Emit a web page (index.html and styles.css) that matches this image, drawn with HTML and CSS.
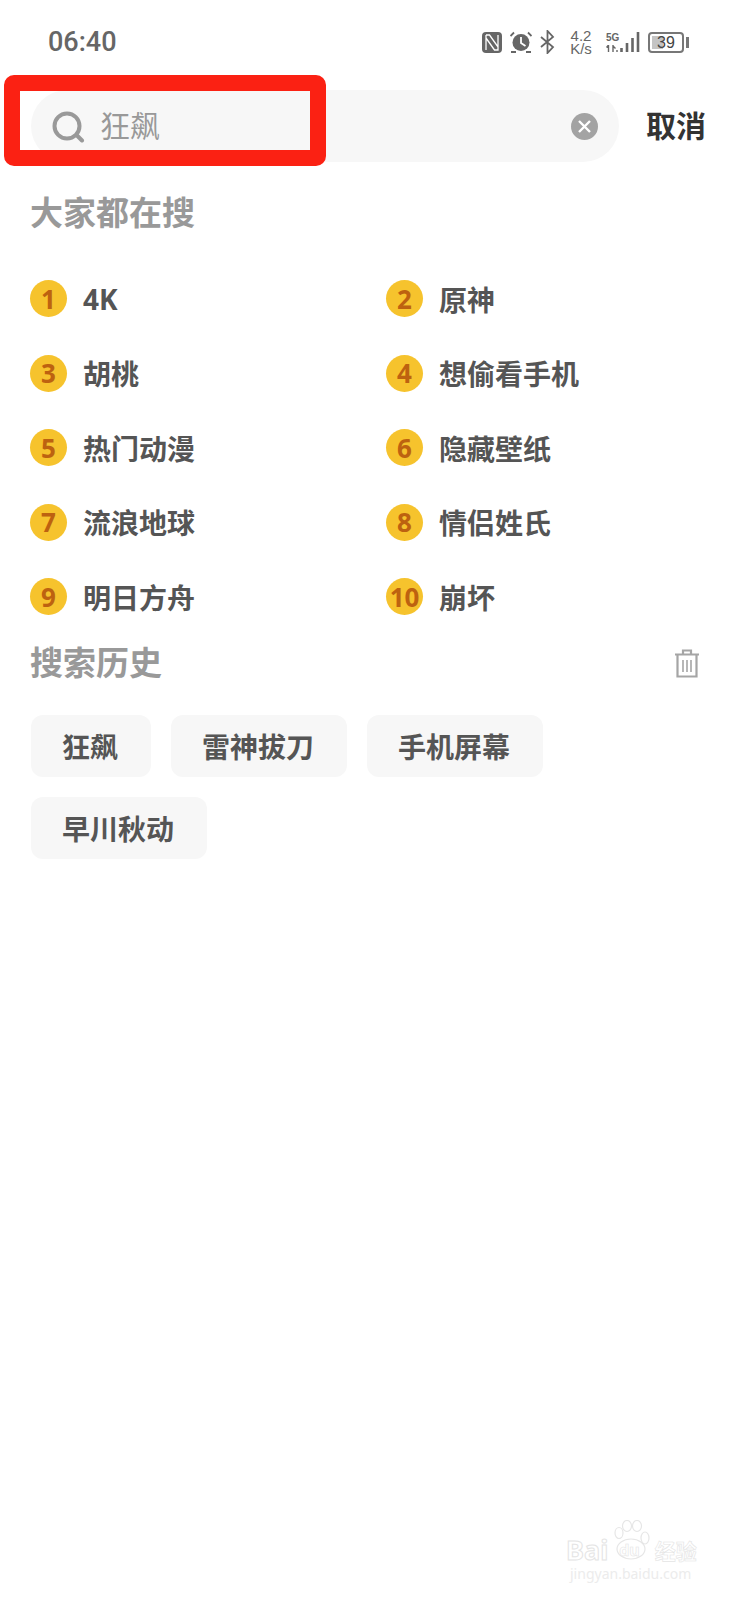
FILE: index.html
```html
<!DOCTYPE html>
<html lang="zh-CN">
<head>
    <meta charset="UTF-8">
    <meta name="viewport" content="width=device-width, initial-scale=1.0">
    <title>搜索</title>
    <link rel="stylesheet" href="styles.css">
</head>
<body>
    <div class="page">
        <!-- 状态栏 -->
        <div class="status-bar">
            <div class="time">06:40</div>
            <div class="status-icons">
                <svg class="icon-nfc" width="20" height="21" viewBox="0 0 20 21">
                    <rect width="20" height="21" rx="4" fill="#666"/>
                    <path d="M4 3h3.500l8.500 12V3M4 3v15M16 15v3h-3.500L4 6" fill="none" stroke="#fff" stroke-width="1.300"/>
                </svg>
                <svg class="icon-alarm" width="22" height="22" viewBox="0 0 22 22">
                    <circle cx="11" cy="11.500" r="8.500" fill="#666"/>
                    <path d="M11 6v6l4.500 3" fill="none" stroke="#fff" stroke-width="1.800"/>
                    <path d="M0.500 5L4 1.500M21.500 5L18 1.500M1 21h5M16 21h5" fill="none" stroke="#666" stroke-width="1.800"/>
                </svg>
                <svg class="icon-bt" width="15" height="24" viewBox="0 0 15 24">
                    <path d="M1 7l12 10-5.500 6V1L13 7 1 17" fill="none" stroke="#666" stroke-width="1.800"/>
                </svg>
                <div class="speed">4.2 K/s</div>
                <div class="signal">
                    <div class="net-label">
                        <span class="net-5g">5G</span>
                        <svg width="12" height="7" viewBox="0 0 12 7">
                            <path d="M2.500 0v7M0.500 2.500L2.500 0M7 0v7M7 1l2.500 2.500M11 5v2" fill="none" stroke="#666" stroke-width="1.400"/>
                        </svg>
                    </div>
                    <svg width="20" height="20" viewBox="0 0 20 20">
                        <path d="M1.500 16v4M7 11v9M12.500 6v14M18 0v20" fill="none" stroke="#666" stroke-width="2.600"/>
                    </svg>
                </div>
                <div class="battery">
                    <div class="battery-body">
                        <div class="battery-level"></div>
                        <span class="battery-text">39</span>
                    </div>
                    <div class="battery-tip"></div>
                </div>
            </div>
        </div>

        <!-- 搜索框 -->
        <div class="search-row">
            <div class="search-box">
                <svg class="search-icon" width="34" height="32" viewBox="0 0 34 32">
                    <circle cx="15" cy="15" r="12.500" fill="none" stroke="#999" stroke-width="4"/>
                    <path d="M24.500 24l5.500 5.500" fill="none" stroke="#999" stroke-width="4" stroke-linecap="round"/>
                </svg>
                <span class="search-text">狂飙</span>
                <svg class="clear-icon" width="27" height="27" viewBox="0 0 27 27">
                    <circle cx="13.500" cy="13.500" r="13.500" fill="#a3a3a3"/>
                    <path d="M8 8l11 11M19 8L8 19" fill="none" stroke="#fff" stroke-width="2.400"/>
                </svg>
            </div>
            <div class="cancel">取消</div>
        </div>

        <div class="section-title hot-title">大家都在搜</div>

        <div class="hot-list">
            <div class="hot-item"><span class="rank">1</span><span>4K</span></div>
            <div class="hot-item"><span class="rank">2</span><span>原神</span></div>
            <div class="hot-item"><span class="rank">3</span><span>胡桃</span></div>
            <div class="hot-item"><span class="rank">4</span><span>想偷看手机</span></div>
            <div class="hot-item"><span class="rank">5</span><span>热门动漫</span></div>
            <div class="hot-item"><span class="rank">6</span><span>隐藏壁纸</span></div>
            <div class="hot-item"><span class="rank">7</span><span>流浪地球</span></div>
            <div class="hot-item"><span class="rank">8</span><span>情侣姓氏</span></div>
            <div class="hot-item"><span class="rank">9</span><span>明日方舟</span></div>
            <div class="hot-item"><span class="rank">10</span><span>崩坏</span></div>
        </div>

        <!-- 搜索历史 -->
        <div class="history-header">
            <div class="section-title">搜索历史</div>
            <svg width="26" height="30" viewBox="0 0 26 30">
                <path d="M1 6.500h24M9 6V2.500h8V6" fill="none" stroke="#a5a5a5" stroke-width="2.200"/>
                <path d="M3.500 7v21.500h19V7" fill="none" stroke="#a5a5a5" stroke-width="2.200"/>
                <path d="M9 12v12M13 12v12M17 12v12" fill="none" stroke="#a5a5a5" stroke-width="1.600"/>
            </svg>
        </div>

        <div class="chips">
            <div class="chip">狂飙</div>
            <div class="chip">雷神拔刀</div>
            <div class="chip">手机屏幕</div>
            <div class="chip">早川秋动</div>
        </div>

        <!-- 红色标注框 -->
        <div class="mark-box"></div>

        <!-- 水印 -->
        <div class="watermark">
            <svg class="paw" width="42" height="40" viewBox="0 0 42 40">
                <g fill="none" stroke="#e6e6e6" stroke-width="1.200">
                    <ellipse cx="7" cy="13" rx="4" ry="5.500"/>
                    <ellipse cx="15" cy="6" rx="4.500" ry="5.500"/>
                    <ellipse cx="25" cy="6" rx="4.500" ry="5.500"/>
                    <ellipse cx="33" cy="18" rx="4" ry="6"/>
                    <ellipse cx="19" cy="29" rx="14" ry="10"/>
                </g>
            </svg>
            <div class="wm-main"><span>Bai</span><span class="wm-du">du</span><span class="wm-cn">经验</span></div>
            <div class="wm-url">jingyan.baidu.com</div>
        </div>
    </div>
</body>
</html>
```

FILE: styles.css
```css
* {
    margin: 0;
    padding: 0;
    box-sizing: border-box;
    font-family: "Noto Sans", "Noto Sans CJK SC", sans-serif;
}

body {
    background-color: #fff;
    color: #555;
}

.page {
    position: relative;
    width: 738px;
    height: 1600px;
    overflow: hidden;
}

.status-bar {
    height: 90px;
    padding: 29px 49px 0 48px;
    display: flex;
    justify-content: space-between;
    align-items: flex-start;
}

.time {
    font-family: Roboto, sans-serif;
    font-size: 27px;
    line-height: 26px;
    font-weight: 500;
    color: #666;
}

.status-icons {
    display: flex;
    align-items: center;
    height: 26px;
}

.icon-alarm {
    margin-left: 8px;
}

.icon-bt {
    margin-left: 8px;
}

.speed {
    margin-left: 14px;
    width: 24px;
    text-align: center;
    font-family: "Liberation Sans", sans-serif;
    font-size: 15px;
    line-height: 13px;
    color: #666;
}

.signal {
    margin-left: 13px;
    display: flex;
    align-items: center;
    gap: 2px;
}

.net-label {
    display: flex;
    flex-direction: column;
    gap: 2px;
    width: 12px;
}

.net-5g {
    font-family: "Liberation Sans", sans-serif;
    font-size: 10px;
    line-height: 10px;
    font-weight: bold;
    color: #666;
}

.battery {
    margin-left: 8px;
    display: flex;
    align-items: center;
    gap: 2px;
}

.battery-body {
    position: relative;
    width: 36px;
    height: 21px;
    border: 2px solid #777;
    border-radius: 4px;
    display: flex;
    align-items: center;
    justify-content: center;
}

.battery-level {
    position: absolute;
    left: 2px;
    top: 2px;
    bottom: 2px;
    width: 11px;
    background-color: #c4c4c4;
}

.battery-text {
    position: relative;
    font-family: "Liberation Sans", sans-serif;
    font-size: 16px;
    line-height: 17px;
    color: #444;
}

.battery-tip {
    width: 3px;
    height: 11px;
    background-color: #777;
}

.search-row {
    display: flex;
    align-items: center;
    padding-left: 31px;
}

.search-box {
    width: 588px;
    height: 72px;
    padding: 0 21px;
    background-color: #f7f7f7;
    border-radius: 36px;
    display: flex;
    align-items: center;
}

.search-icon {
    margin-top: 1px;
}

.search-text {
    flex: 1;
    margin-left: 14px;
    font-size: 30px;
    line-height: 40px;
    color: #999;
}

.cancel {
    margin-left: 27px;
    font-size: 30px;
    line-height: 40px;
    font-weight: bold;
    color: #333;
}

.section-title {
    font-size: 33px;
    line-height: 44px;
    font-weight: bold;
    color: #999;
}

.hot-title {
    margin: 29px 0 0 30px;
}

.hot-list {
    margin: 45px 0 0 30px;
    display: grid;
    grid-template-columns: 356px 1fr;
    grid-auto-rows: 74.5px;
}

.hot-item {
    display: flex;
    align-items: center;
    gap: 16px;
    height: 37px;
    font-size: 28px;
    font-weight: bold;
    color: #555;
}

.rank {
    width: 37px;
    height: 37px;
    border-radius: 50%;
    background-color: #f6c32d;
    display: flex;
    align-items: center;
    justify-content: center;
    font-size: 26px;
    font-weight: bold;
    color: #bd6210;
}

.history-header {
    margin: -12px 38px 0 30px;
    display: flex;
    justify-content: space-between;
    align-items: center;
}

.chips {
    margin: 30px 0 0 31px;
    width: 600px;
    display: flex;
    flex-wrap: wrap;
    gap: 20px;
}

.chip {
    height: 62px;
    padding: 0 33px 0 31px;
    background-color: #f7f7f7;
    border-radius: 12px;
    display: flex;
    align-items: center;
    font-size: 28px;
    font-weight: bold;
    color: #555;
}

.mark-box {
    position: absolute;
    left: 4px;
    top: 75px;
    width: 322px;
    height: 91px;
    border: 16px solid #fb2113;
    border-radius: 10px;
}

.watermark {
    position: absolute;
    left: 566px;
    top: 1520px;
    width: 140px;
    color: #fff;
    font-family: "Liberation Sans", sans-serif;
}

.paw {
    position: absolute;
    left: 46px;
    top: 0;
}

.wm-main {
    margin-top: 15px;
    display: flex;
    align-items: center;
    font-size: 27px;
    line-height: 30px;
    font-weight: bold;
    -webkit-text-stroke: 1px #e4e4e4;
}

.wm-du {
    margin-left: 11px;
    font-size: 16px;
    -webkit-text-stroke: 0.6px #e4e4e4;
}

.wm-cn {
    margin-left: 15px;
    font-family: "Noto Sans CJK SC", sans-serif;
    font-size: 21px;
    -webkit-text-stroke: 0.6px #e4e4e4;
}

.wm-url {
    margin: 1px 0 0 4px;
    font-size: 14px;
    line-height: 15px;
    color: #ececec;
    white-space: nowrap;
}
```
